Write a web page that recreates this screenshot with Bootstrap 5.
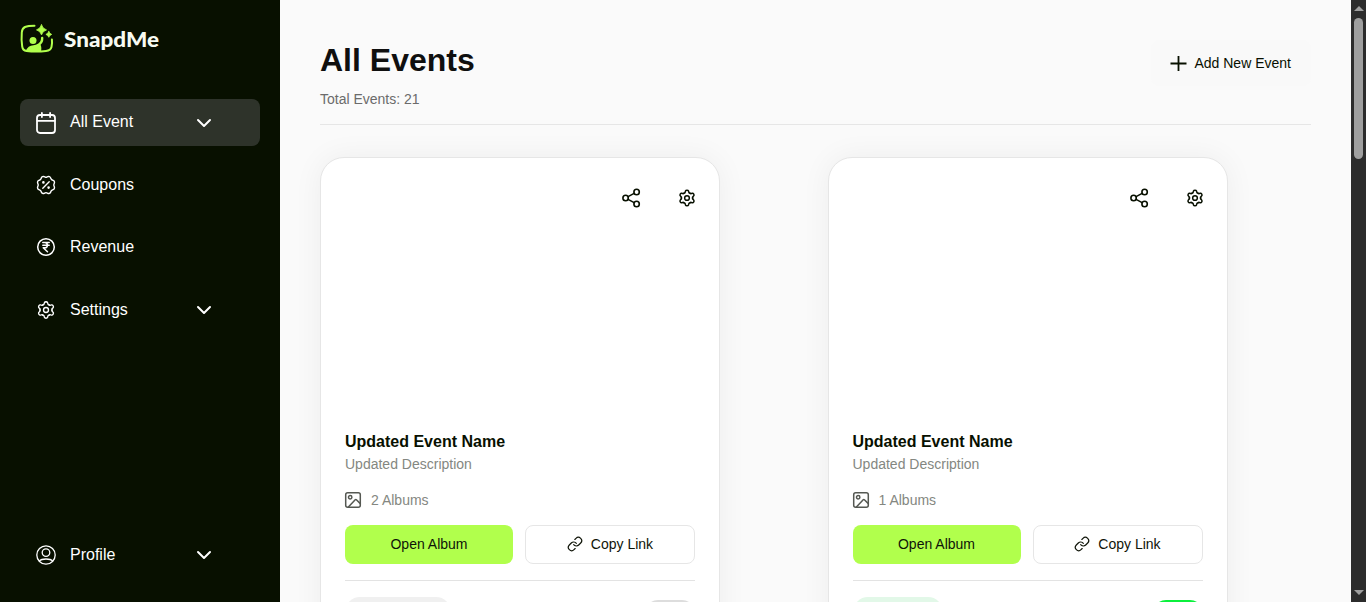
<!DOCTYPE html>
<html lang="en">
<head>
<meta charset="utf-8">
<meta name="viewport" content="width=device-width, initial-scale=1">
<title>SnapdMe - All Events</title>
<link href="https://cdn.jsdelivr.net/npm/bootstrap@5.3.0/dist/css/bootstrap.min.css" rel="stylesheet">
<style>
  body { font-family: "Liberation Sans", Arial, sans-serif; background: #fafafa; color: #081000; line-height: 1.5; }
  svg { display: block; flex: none; fill: none; stroke: currentColor; stroke-width: 1.5; stroke-linecap: round; stroke-linejoin: round; overflow: visible; }
  .sidebar { width: 280px; background: #081000; padding: 20px 20px 23.5px; }
  .brand-mark { height: 40px; }
  .side-nav { margin-top: 39px; gap: 15.6px; }
  .side-nav .nav-link, .profile-link { height: 47px; padding: 0 48px 0 16px; border-radius: 8px; color: #fff; font-size: 16px; line-height: 24px; gap: 14px; }
  .side-nav .nav-link.active { background: #2e332a; }
  .nav-label { margin-bottom: 1px; }
  .nav-icon { width: 20px; display: flex; justify-content: center; }
  .nav-icon.raised { margin-bottom: 1.6px; }
  .main-area { padding: 40px 40px 0; }
  .page-head { height: 85px; border-bottom: 1px solid #e6e6e6; margin-bottom: 32px; }
  .page-head h1 { font-size: 32px; font-weight: 700; line-height: 40px; color: #0f0f0f; }
  .total { font-size: 14px; line-height: 20px; color: #6b6b6b; margin-top: 9px; }
  .add-btn { height: 46px; width: 160px; font-size: 14px; gap: 8px; background: #f9f9f9; border-radius: 8px; color: #081000; padding: 0 0 0 .4px; border: 0; }
  .plus { stroke-width: 1.8; stroke-linecap: butt; }
  .event-grid { display: grid; grid-template-columns: 1fr 1fr; gap: 24px; }
  .event-card { width: 400px; height: 520px; border: 1px solid #e6e6e6; border-radius: 24px; padding: 24px; background: #fff; box-shadow: 0 0 30px rgba(0,0,0,.055); }
  .cover { height: 248px; padding: 5px 0 0; gap: 36px; }
  .cover svg { stroke-width: 1.6; }
  .cover .cog { margin: 1px -2px 0 -1px; stroke-width: 1.9; }
  .event-name { font-size: 16px; font-weight: 700; line-height: 24px; }
  .event-desc { font-size: 14px; line-height: 21px; color: #848781; }
  .album-row { font-size: 14px; line-height: 21px; color: #848781; gap: 10px; margin-top: 15px; }
  .album-row svg { color: #555852; margin-bottom: 1px; }
  .action-row { gap: 12px; margin: 14px 0 16px; }
  .action-row .btn { height: 39px; font-size: 14px; line-height: 20px; border-radius: 8px; padding: 0 0 1px; color: #0f1408; }
  .action-row .btn-open { width: 168px; background: #b1ff4c; border: 0; }
  .action-row .btn-copy { width: 170px; gap: 8px; border: 1px solid #e6e6e6; background: #fff; }
  .btn-copy svg { stroke-width: 1.8; }
  .card-foot { border-top: 1px solid #e3e3e3; padding-top: 16px; }
  .status-pill { height: 30px; width: 106px; border-radius: 15px; background: #f0f0f0; }
  .status-pill.live { width: 90px; background: #e2f8e8; }
  .toggle-pill { width: 50px; height: 26px; border-radius: 13px; background: #ddd; margin-top: 3px; }
  .toggle-pill.live { background: #0bf03c; }
  .scroll-rail { width: 15px; background: #2c2c2c; padding: 6px 0 7px; }
  .scroll-thumb { width: 9px; height: 141px; border-radius: 5px; background: #9f9f9f; margin-top: 7px; }
  .tri { width: 0; border: 5px solid transparent; }
  .tri-up { border-top: 0; border-bottom-color: #9f9f9f; }
  .tri-down { border-bottom: 0; border-top-color: #9f9f9f; }
</style>
</head>
<body>
<svg class="d-none">
  <symbol id="gear" viewBox="0 0 24 24" overflow="visible">
    <g id="gear-half">
      <path id="tooth" d="M8.3 5.59C9.7 6.2 9.6 4.6 10.1 3.2C10.6 1.7 13.4 1.7 13.9 3.2C14.4 4.6 14.3 6.2 15.7 5.59"/>
      <use href="#tooth" transform="rotate(60 12 12)"/><use href="#tooth" transform="rotate(120 12 12)"/>
    </g>
    <use href="#gear-half" transform="rotate(180 12 12)"/><circle cx="12" cy="12" r="3"/>
  </symbol>
  <symbol id="chev" viewBox="0 0 16 10" overflow="visible"><path d="M2 2l6 6 6-6" stroke-width="2"/></symbol>
  <symbol id="share" viewBox="0 0 20 22" overflow="visible"><circle cx="3.6" cy="11" r="2.7"/><circle cx="14.6" cy="5" r="2.7"/><circle cx="14.6" cy="17" r="2.7"/><path d="M6.1 9.6l6-3.2M6.1 12.4l6 3.2"/></symbol>
  <symbol id="pic" viewBox="0 0 16 16" overflow="visible"><rect x=".7" y=".7" width="14.6" height="14.6" rx="2"/><circle cx="5.2" cy="5.2" r="1.7"/><path d="M3.4 15l6.8-7.2q.6-.6 1.2 0l3.9 3.8"/></symbol>
  <symbol id="chain" viewBox="0 0 24 24" overflow="visible"><path d="M10 13a5 5 0 0 0 7.54.54l3-3a5 5 0 0 0-7.07-7.07l-1.72 1.71M14 11a5 5 0 0 0-7.54-.54l-3 3a5 5 0 0 0 7.07 7.07l1.71-1.71"/></symbol>
</svg>

<div class="d-flex vh-100 overflow-hidden">
  <aside class="sidebar d-flex flex-column flex-shrink-0">
    <a class="brand-mark d-block" href="#" aria-label="SnapdMe">
      <svg width="140" height="40" viewBox="0 0 140 40">
        <g stroke="#b1ff4c" stroke-width="2">
          <path d="M14.5 5.8Q8 5.8 5 7Q2 8.5 1.8 12.5Q1.2 20 2.2 26.5Q2.8 30.5 6.5 31Q16 32.2 26 31Q30.7 30.5 31.5 27Q32.4 23 31.9 19.5"/>
          <path d="M22.2 18Q22.5 23 17.2 25.5" stroke-width="2.4"/>
        </g>
        <g fill="#b1ff4c" stroke="none">
          <circle cx="13" cy="20.5" r="3.5"/>
          <path d="M5.5 31Q8 25.5 13.5 25.2L18 24.3Q22 23 21.2 31Z"/>
          <path d="M21.5 4.8q1.1 4 5 5.1q-3.9 1.1-5 5q-1.1-3.9-5-5q3.9-1.1 5-5.1zM28.8 11.5q.7 2.3 2.9 2.9q-2.2.7-2.9 2.9q-.7-2.2-2.9-2.9q2.2-.6 2.9-2.9z" stroke="#b1ff4c" stroke-width=".8"/>
        </g>
        <text x="44" y="27" fill="#f7fbf2" stroke="none" font-family="Lato, sans-serif" font-weight="900" font-size="21.5" textLength="95" lengthAdjust="spacingAndGlyphs">SnapdMe</text>
      </svg>
    </a>
    <nav class="side-nav nav flex-column">
      <a class="nav-link active d-flex align-items-center" href="#">
        <span class="nav-icon"><svg width="20" height="22" viewBox="0 0 20 22" style="stroke-width:1.8"><rect x="1" y="3" width="18" height="18" rx="3"/><path d="M1.3 8.8h17.4M5.9 1v4M14.1 1v4"/></svg></span>
        <span class="nav-label">All Event</span><svg class="ms-auto" width="16" height="10"><use href="#chev"/></svg>
      </a>
      <a class="nav-link d-flex align-items-center" href="#">
        <span class="nav-icon"><svg width="24" height="24" viewBox="0 0 24 24" style="stroke-width:1.4"><path transform="rotate(22.5 12 12)" d="M5 7.2a2.2 2.2 0 0 1 2.2-2.2h1a2.2 2.2 0 0 0 1.55-.64l.7-.7a2.2 2.2 0 0 1 3.12 0l.7.7c.41.41.97.64 1.55.64h1a2.2 2.2 0 0 1 2.2 2.2v1c0 .58.23 1.14.64 1.55l.7.7a2.2 2.2 0 0 1 0 3.12l-.7.7a2.2 2.2 0 0 0-.64 1.55v1a2.2 2.2 0 0 1-2.2 2.2h-1a2.2 2.2 0 0 0-1.55.64l-.7.7a2.2 2.2 0 0 1-3.12 0l-.7-.7a2.2 2.2 0 0 0-1.55-.64h-1a2.2 2.2 0 0 1-2.2-2.2v-1a2.2 2.2 0 0 0-.64-1.55l-.7-.7a2.2 2.2 0 0 1 0-3.12l.7-.7a2.2 2.2 0 0 0 .64-1.55z"/><path d="M8.8 15.2l6.4-6.4"/><circle cx="9.4" cy="9.4" r=".6" fill="currentColor"/><circle cx="14.6" cy="14.6" r=".6" fill="currentColor"/></svg></span>
        <span class="nav-label">Coupons</span>
      </a>
      <a class="nav-link d-flex align-items-center" href="#">
        <span class="nav-icon raised"><svg width="20" height="20" viewBox="0 0 20 20"><circle cx="10" cy="10" r="8.3"/><path d="M6.8 5.5h6.4M6.8 8.2h6.4M7 5.5h1.8c3.4 0 3.4 5.3 0 5.3H7.2l4.3 4"/></svg></span>
        <span class="nav-label">Revenue</span>
      </a>
      <a class="nav-link d-flex align-items-center" href="#">
        <span class="nav-icon"><svg width="20" height="20" style="stroke-width:1.6"><use href="#gear"/></svg></span>
        <span class="nav-label">Settings</span><svg class="ms-auto" width="16" height="10"><use href="#chev"/></svg>
      </a>
    </nav>
    <a class="profile-link mt-auto d-flex align-items-center text-decoration-none" href="#">
      <span class="nav-icon"><svg width="20" height="20" viewBox="0 0 20 20" style="stroke-width:1.3"><circle cx="10" cy="10" r="9.2"/><circle cx="10" cy="7.6" r="3.8"/><path d="M3.4 16.2Q5.2 14 10 14T16.6 16.2"/></svg></span>
      <span class="nav-label">Profile</span><svg class="ms-auto" width="16" height="10"><use href="#chev"/></svg>
    </a>
  </aside>

  <main class="main-area flex-grow-1">
    <header class="page-head d-flex justify-content-between align-items-start">
      <div><h1 class="mb-0">All Events</h1><div class="total">Total Events: 21</div></div>
      <button class="add-btn btn d-flex align-items-center justify-content-center"><svg class="plus" width="15" height="15" viewBox="0 0 15 15"><path d="M7.5 0v15M-.5 7.5h16"/></svg>Add New Event</button>
    </header>
    <section class="event-grid">
      <article class="event-card">
        <div class="cover d-flex justify-content-end align-items-start"><svg width="20" height="22"><use href="#share"/></svg><svg class="cog" width="20" height="20" viewBox="-.6 -.6 21.2 21.2"><use href="#gear" width="20" height="20"/></svg></div>
        <div class="event-name">Updated Event Name</div>
        <div class="event-desc">Updated Description</div>
        <div class="album-row d-flex align-items-center"><svg width="16" height="16"><use href="#pic"/></svg>2 Albums</div>
        <div class="action-row d-flex"><button class="btn btn-open">Open Album</button><button class="btn btn-copy d-flex align-items-center justify-content-center"><svg width="16" height="16"><use href="#chain"/></svg>Copy Link</button></div>
        <div class="card-foot d-flex justify-content-between"><span class="status-pill"></span><span class="toggle-pill"></span></div>
      </article>
      <article class="event-card">
        <div class="cover d-flex justify-content-end align-items-start"><svg width="20" height="22"><use href="#share"/></svg><svg class="cog" width="20" height="20" viewBox="-.6 -.6 21.2 21.2"><use href="#gear" width="20" height="20"/></svg></div>
        <div class="event-name">Updated Event Name</div>
        <div class="event-desc">Updated Description</div>
        <div class="album-row d-flex align-items-center"><svg width="16" height="16"><use href="#pic"/></svg>1 Albums</div>
        <div class="action-row d-flex"><button class="btn btn-open">Open Album</button><button class="btn btn-copy d-flex align-items-center justify-content-center"><svg width="16" height="16"><use href="#chain"/></svg>Copy Link</button></div>
        <div class="card-foot d-flex justify-content-between"><span class="status-pill live"></span><span class="toggle-pill live"></span></div>
      </article>
    </section>
  </main>
  <div class="scroll-rail d-flex flex-column align-items-center flex-shrink-0"><span class="tri tri-up"></span><span class="scroll-thumb"></span><span class="tri tri-down mt-auto"></span></div>
</div>
<script src="https://cdn.jsdelivr.net/npm/bootstrap@5.3.0/dist/js/bootstrap.bundle.min.js"></script>
</body>
</html>
